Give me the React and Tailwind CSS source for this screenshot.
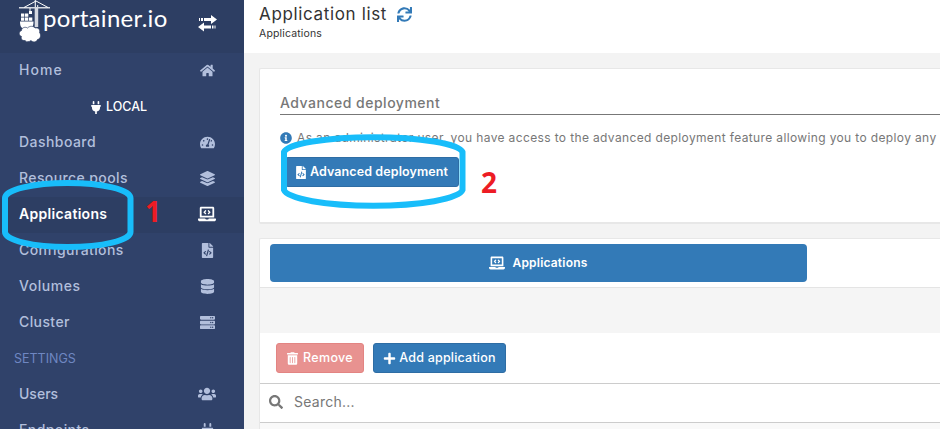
import React from "react";
import {
  FaHome, FaPlug, FaTachometerAlt, FaLayerGroup, FaLaptopCode, FaFileCode,
  FaDatabase, FaServer, FaUsers, FaSync, FaInfoCircle, FaTrashAlt, FaPlus, FaSearch,
} from "react-icons/fa";

const items = [
  { label: "Dashboard", icon: FaTachometerAlt, tracking: "tracking-[0.45px]" },
  { label: "Resource pools", icon: FaLayerGroup, tracking: "tracking-[0.4px]" },
  { label: "Applications", icon: FaLaptopCode, tracking: "tracking-[0.3px]", active: true },
  { label: "Configurations", icon: FaFileCode, tracking: "tracking-[0.4px]" },
  { label: "Volumes", icon: FaDatabase, tracking: "tracking-[0.55px]" },
  { label: "Cluster", icon: FaServer, tracking: "tracking-[0.4px]" },
];

function NavItem({ label, icon: Icon, tracking, active }) {
  return (
    <a className={`flex h-9 shrink-0 items-center justify-between pr-[27px] pl-[19px] text-[14px] ${active ? "bg-[#2d3e63] font-semibold text-white" : "font-medium text-[#b2bfdc]"}`}>
      <span className={`whitespace-nowrap pb-[4px] ${tracking}`}>{label}</span>
      <span className="flex w-[20px] justify-center pb-[2px]">
        <Icon className={label === "Users" || active ? "size-[18px] shrink-0" : "size-[15px] shrink-0"} />
      </span>
    </a>
  );
}

function Logo() {
  return (
    <div className="flex h-[42px] items-start">
      <svg width="32" height="42" viewBox="0 0 32 42" fill="#fff">
        <path d="M0 7h31v1.400H0zM15.700 0h1.300v27h-1.300zM18 5h1.200v22H18zM17 8h1v19h-1z" fillOpacity=".8" />
        <path d="M17 1L5 7.500M17 1l12 6.500M11 8v5" stroke="#fff" strokeWidth="1" fill="none" />
        <path d="M10 11h3v3h-3zM2 13.500h3.300v3.300H2zM6 13.500h3.300v3.300H6zM2 17.500h3.300v3.300H2zM6 17.500h3.300v3.300H6zM10 17.500h3.300v3.300H10zM1 21.500h13.500c0 4-1 7-4 7H5c-3 0-4-3-4-7z" />
        <path d="M6 40.500c-3 .5-4.500-2-3.500-4-3-1-3-5 0-6 0-3 4-4 6-2.500 2.500-2.500 6-2 7.500 0 3-.8 5.500 1.500 4.500 4.500 2 2.500 1 6.500-2 7-1 3-5 3-6.500 1-2 1.700-5 1.500-6 0z" stroke="#2d3e63" strokeWidth=".7" />
      </svg>
      <span className="-ml-[8px] font-['Lato',sans-serif] text-[24px] leading-[36px] tracking-[0.3px] text-white">portainer.io</span>
    </div>
  );
}

export default function App() {
  return (
    <div className="relative flex h-[429px] w-[940px] overflow-hidden bg-[#f3f3f3] font-['Inter',sans-serif]">
      <aside className="flex w-[244px] shrink-0 flex-col overflow-hidden bg-[#30426a]">
        <div className="flex h-[53px] shrink-0 justify-between bg-[#2d3e63] pr-[27px] pl-[19px]">
          <Logo />
          <svg className="mt-[15px]" width="19" height="17" viewBox="0 0 19 17" fill="#fff">
            <path d="M13 0l6 4.500-6 4.500V6H6V3h7zM1 3h1v3H1zM3 3h2v3H3zM6 7.500v3h7v3H6v3L0 12zM14 10.500h1.500v3H14zM16.500 10.500h1v3h-1z" />
          </svg>
        </div>
        <NavItem label="Home" icon={FaHome} tracking="tracking-[1.1px]" />
        <div className="flex h-9 shrink-0 items-center justify-center gap-[5px] pr-[6px] text-[12.5px] font-medium text-white">
          <FaPlug className="h-[13px] w-[10px]" />
          <span>LOCAL</span>
        </div>
        {items.map((item) => <NavItem key={item.label} {...item} />)}
        <div className="flex h-9 shrink-0 items-center pl-[14px] text-[12.5px] text-[#6f87c2]">SETTINGS</div>
        <NavItem label="Users" icon={FaUsers} tracking="tracking-[0px]" />
        <NavItem label="Endpoints" icon={FaPlug} tracking="tracking-[0.4px]" />
      </aside>

      <main className="flex min-w-0 flex-1 flex-col">
        <header className="h-[53px] shrink-0 bg-white pl-[15px]">
          <div className="flex h-[28px] items-center gap-[10px] text-[17px] text-[#333]">
            <h1 className="whitespace-nowrap pt-[2px] tracking-[0.65px]">Application list</h1>
            <FaSync className="size-[15px] text-[#337ab7]" />
          </div>
          <p className="text-[10.5px] leading-[11px] tracking-[0.15px] text-[#333]">Applications</p>
        </header>

        <section className="mt-[15px] ml-[15px] h-[156px] shrink-0 rounded-l-[2px] border-t border-l border-b-2 border-[#e7e7e7] bg-white pt-[24px] pl-[20px]">
          <h2 className="h-[22px] border-b border-[#777] text-[14px] leading-[20px] font-medium tracking-[0.5px] text-[#777]">Advanced deployment</h2>
          <p className="mt-[14px] flex h-[18px] items-center gap-[6px] whitespace-nowrap text-[12px] tracking-[0.365px] text-[#777]">
            <FaInfoCircle className="size-[12px] shrink-0 text-[#337ab7]" />
            <span className="-ml-px">As an administrator user, you have access to the advanced deployment feature allowing you to deploy any</span>
          </p>
          <button className="mt-[10px] ml-[5px] flex h-[30px] w-[174px] items-center justify-center gap-[4px] whitespace-nowrap rounded-[3px] border border-[#2e6da4] bg-[#337ab7] text-[12.5px] font-semibold tracking-[0.1px] text-white">
            <FaFileCode className="h-[13px] w-[10px]" />
            <span>Advanced deployment</span>
          </button>
        </section>

        <section className="mt-[14px] ml-[15px] flex flex-1 flex-col rounded-tl-[2px] border-t border-l border-[#e7e7e7] bg-white">
          <div className="flex h-[49px] shrink-0 border-b border-[#e4e4e4] pt-[5px] pl-[10px]">
            <div className="flex h-[38px] w-[537px] items-center justify-center gap-[7px] rounded-[4px] bg-[#337ab7] text-[12px] font-semibold text-white">
              <FaLaptopCode className="size-[16px]" />
              <span className="tracking-[0.2px]">Applications</span>
            </div>
          </div>
          <div className="h-[45px] shrink-0 bg-[#f5f5f5]" />
          <div className="flex h-[51px] shrink-0 items-start gap-[9px] border-b border-[#ccc] pt-[10px] pl-[16px] text-[12.5px] font-medium text-white">
            <button className="flex h-[30px] w-[88px] items-center justify-center gap-[5px] rounded-[3px] border border-[#e38482] bg-[#e89290]">
              <FaTrashAlt className="h-[13px] w-[11px]" /><span className="tracking-[0.3px]">Remove</span>
            </button>
            <button className="flex h-[30px] w-[133px] items-center justify-center gap-[3px] whitespace-nowrap rounded-[3px] border border-[#2e6da4] bg-[#337ab7]">
              <FaPlus className="size-[13px]" /><span className="tracking-[0.2px]">Add application</span>
            </button>
          </div>
          <div className="flex h-[39px] shrink-0 items-center gap-[11px] border-b border-[#ccc] pb-[3px] pl-[9px] text-[14px] text-[#777]">
            <FaSearch className="size-[14px]" /><span className="tracking-[0.25px]">Search...</span>
          </div>
          <div className="flex-1 bg-[#f9f9f9]" />
        </section>
      </main>

      <svg className="absolute inset-0" width="940" height="429" fill="none" stroke="#18bdfa" strokeWidth="6">
        <path d="M5 198A62.500 15 0 0 1 130.500 198V232A62.500 15 0 0 1 5 232Z" />
        <path d="M284 152A89.500 16 0 0 1 462.500 152V190A89.500 17 0 0 1 284 190Z" />
      </svg>
      <span className="absolute top-[197px] left-[145px] font-['Open_Sans',sans-serif] text-[28px] leading-[28px] font-bold text-[#ed1c24]">1</span>
      <span className="absolute top-[168px] left-[481px] font-['Open_Sans',sans-serif] text-[28px] leading-[28px] font-bold text-[#ed1c24]">2</span>
    </div>
  );
}
